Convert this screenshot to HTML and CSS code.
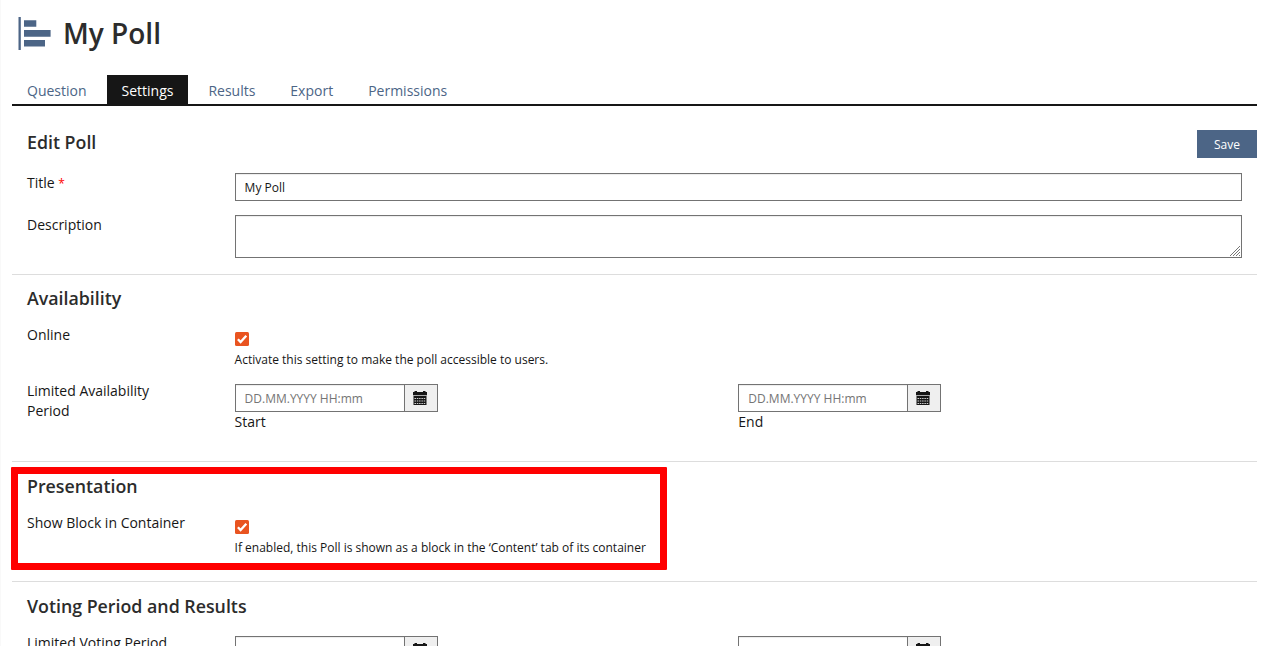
FILE: index.html
```html
<!DOCTYPE html>
<html lang="en">
<head>
<meta charset="utf-8">
<title>My Poll</title>
<link rel="stylesheet" href="styles.css">
</head>
<body>
<svg class="symbols" width="0" height="0">
  <symbol id="calendar" viewBox="0 0 14 14">
    <path fill="#161616" d="M1.500 0h2.500v1h6V0h2.500v1H14v3H0V1h1.500zM.5 5h13v9H.5z"/>
    <path fill="#aaa" d="M0 4h14v1H0z"/>
    <path stroke="#d0d0d0" stroke-width="1.200" stroke-dasharray="1.500 .8" d="M1.500 7.500h11.300M1.500 10h11.300M1.500 12.500h11.300"/>
  </symbol>
  <symbol id="check" viewBox="0 0 14 14">
    <rect width="14" height="14" rx="1.500" fill="#e95420"/>
    <path d="M2.900 7.200l2.700 2.900 5.700-6.400" fill="none" stroke="#fff" stroke-width="2.300"/>
  </symbol>
</svg>
<div class="page">
  <header class="header">
    <svg class="logo" width="34" height="34" viewBox="0 0 34 34" fill="#4c6586"><path d="M.5 1h2.300v33H.5zM6 4.300h12.300v6.500H6zM6 14h26.600v6.800H6zM6 24h21v6.500H6z"/></svg>
    <h1>My Poll</h1>
  </header>
  <nav class="tabs">
    <a>Question</a><a class="active">Settings</a><a>Results</a><a>Export</a><a>Permissions</a>
  </nav>
  <section class="section edit">
    <div class="heading"><h2>Edit Poll</h2><button class="save">Save</button></div>
    <div class="row title-row"><label>Title <span class="required">*</span></label><input class="field" value="My Poll"></div>
    <div class="row"><label>Description</label>
      <div class="textarea-wrap"><textarea class="field"></textarea>
        <svg class="grip" width="12" height="12" viewBox="0 0 12 12"><path d="M1 11L11 1M4 11l7-7M7 11l4-4M10 11l1-1" stroke="#777" stroke-width="1"/></svg>
      </div>
    </div>
  </section>
  <section class="section availability">
    <h2>Availability</h2>
    <div class="row check-row"><label>Online</label><div><svg class="checkbox"><use href="#check"/></svg><p>Activate this setting to make the poll accessible to users.</p></div></div>
    <div class="row"><label>Limited Availability Period</label>
      <div class="dates">
        <div><div class="date"><input placeholder="DD.MM.YYYY HH:mm"><span><svg><use href="#calendar"/></svg></span></div><label>Start</label></div>
        <div><div class="date"><input placeholder="DD.MM.YYYY HH:mm"><span><svg><use href="#calendar"/></svg></span></div><label>End</label></div>
      </div>
    </div>
  </section>
  <section class="section presentation">
    <h2>Presentation</h2>
    <div class="row check-row"><label>Show Block in Container</label><div><svg class="checkbox"><use href="#check"/></svg><p>If enabled, this Poll is shown as a block in the ‘Content’ tab of its container</p></div></div>
    <div class="highlight"></div>
  </section>
  <section class="section voting">
    <h2>Voting Period and Results</h2>
    <div class="row"><label>Limited Voting Period</label>
      <div class="dates">
        <div class="date"><input><span><svg><use href="#calendar"/></svg></span></div>
        <div class="date"><input><span><svg><use href="#calendar"/></svg></span></div>
      </div>
    </div>
  </section>
</div>
</body>
</html>
```
FILE: styles.css
```css
* { box-sizing: border-box; }
html, body { height: 646px; margin: 0; overflow: hidden; }
body { background: #fff; color: #161616; font: 14px/20px "Open Sans", sans-serif; }
h1, h2, p { margin: 0; }
input, textarea, button { font: 12px/17px "Open Sans", sans-serif; color: #161616; margin: 0; }
.symbols { position: absolute; }
.page { height: 646px; overflow: hidden; padding: 0 7px 0 11px; border-left: 1px solid #f9f9f9; }
.header { display: flex; height: 75px; padding: 16px 0 0 6px; gap: 11px; }
.logo { display: block; flex: none; }
h1 { font-size: 28px; line-height: 34px; font-weight: 600; color: #2c2c2c; }
.tabs { display: flex; height: 31px; border-bottom: 2px solid #161616; gap: 5.600px; }
.tabs a { height: 29px; padding: 6px 14.700px 0; color: #4c6586; }
.tabs a:first-child { padding-left: 15px; }
.tabs .active { background: #161616; color: #fff; }
.section { border-bottom: 1px solid #ddd; padding: 0 15px; }
h2 { font-size: 17.800px; line-height: 24px; font-weight: 600; color: #2c2c2c; }
.edit { height: 169px; padding-top: 24px; }
.heading { display: flex; justify-content: space-between; height: 43px; margin-right: -15px; }
.save { width: 60px; height: 28px; border: 0; padding: 1px 0 0; background: #4c6586; color: #fff; }
.row { display: grid; grid-template-columns: 207.600px 1fr; align-items: start; }
.row > label { padding-right: 60px; }
.row > label:only-child { padding-right: 0; }
.title-row { height: 42px; }
.required { color: #f00; font-size: 12px; }
.field, .date input { border: 1px solid #737373; border-radius: 0; background: #fff; padding: 4px 9px; box-shadow: inset 0 1px 1px rgba(0, 0, 0, .075); }
.field { display: block; width: 100%; height: 28px; }
textarea.field { height: 43px; resize: none; }
.textarea-wrap { position: relative; }
.grip { position: absolute; right: 1px; bottom: 1px; }
.availability { height: 187px; padding-top: 11px; }
.check-row { padding-top: 15px; }
.check-row > label { padding-right: 0; }
.availability .check-row { height: 71px; }
.checkbox { display: block; width: 14px; height: 14px; margin-top: 7px; }
.check-row p { font-size: 12px; line-height: 17px; margin-top: 5px; }
.dates { display: grid; grid-template-columns: 1fr 1fr; padding-top: 3px; }
.date { display: flex; width: 203px; height: 28px; }
.date input { width: 170px; }
.date input::placeholder { color: #757575; opacity: 1; }
.date span { width: 33px; border: 1px solid #737373; border-left: 0; background: #efefef; padding: 6px 0 0 8px; }
.date svg { display: block; width: 14px; height: 14px; }
.presentation { position: relative; height: 120px; padding-top: 12px; }
.highlight { position: absolute; left: -1px; top: 5px; width: 656px; height: 103px; border: 7px solid #f00; border-radius: 1px; }
.voting { padding-top: 12px; border: 0; }
.voting .row { padding-top: 15px; }
```
